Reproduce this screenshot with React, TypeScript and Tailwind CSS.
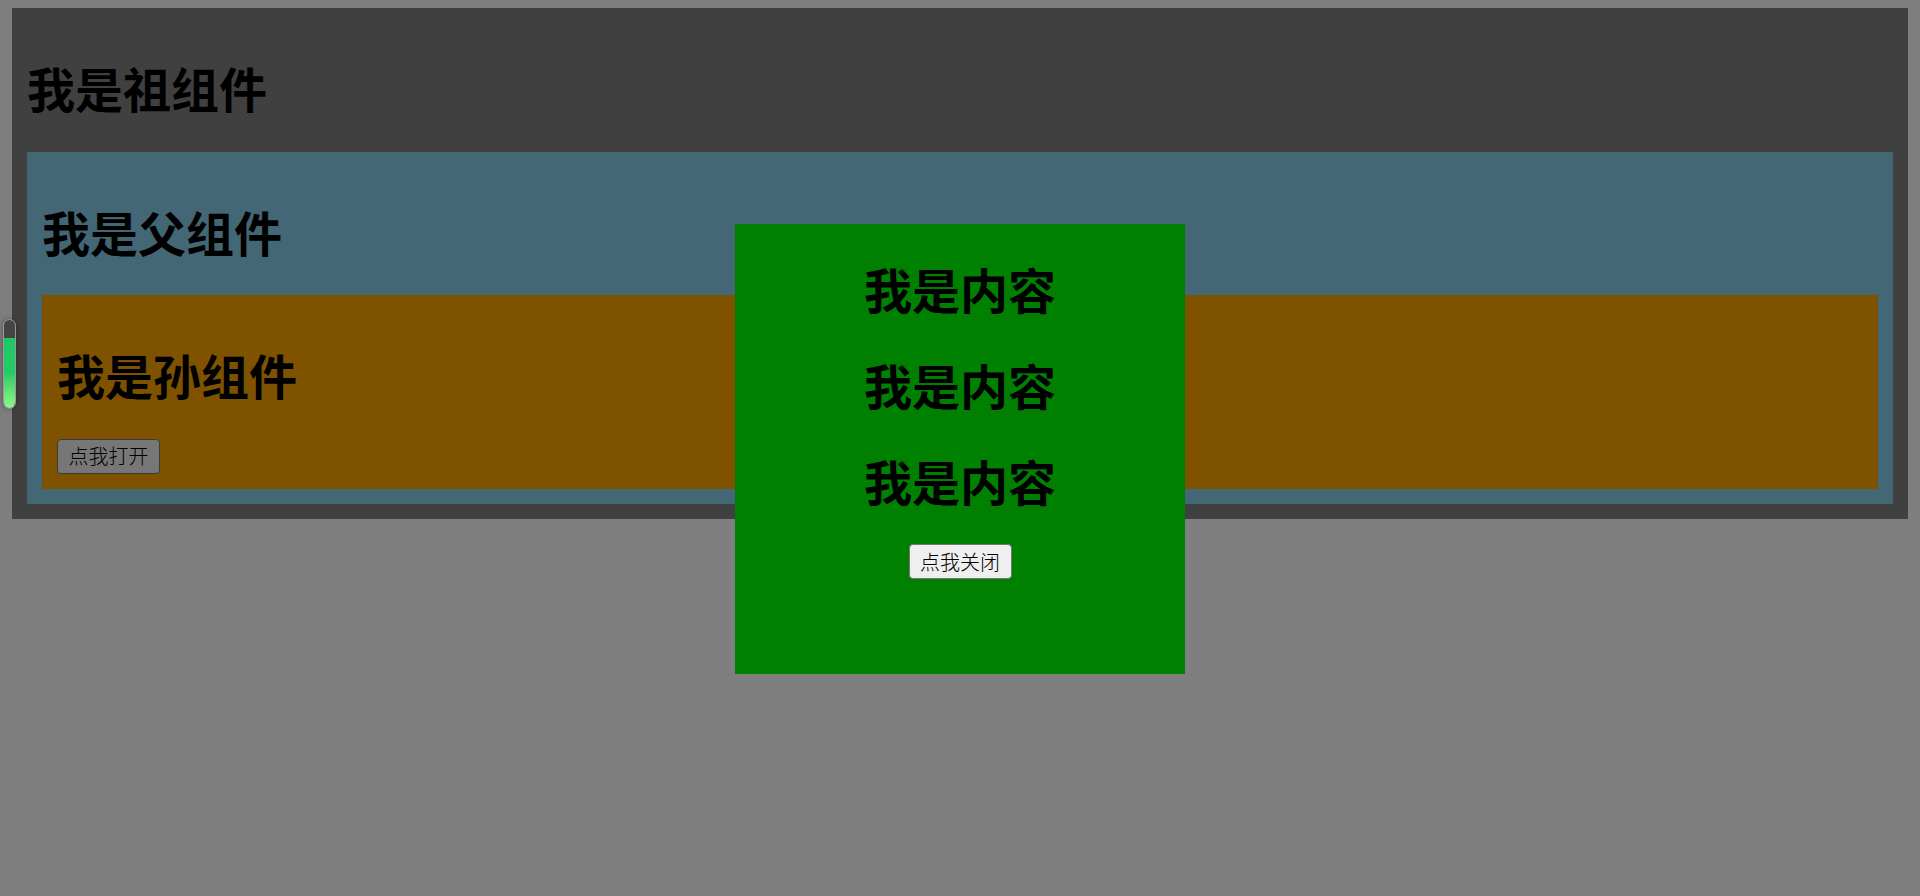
import { useState } from 'react'

const font = "font-['Noto_Sans_CJK_SC','Microsoft_YaHei',sans-serif]"

function Title({ children, first = true }: { children: React.ReactNode; first?: boolean }) {
  return (
    <h1
      className={`${first ? 'my-[32px]' : 'mb-[32px]'} text-[48px] font-bold leading-[64.5px] text-black`}
    >
      {children}
    </h1>
  )
}

function ModalTitle({ children, first = false }: { children: React.ReactNode; first?: boolean }) {
  return (
    <h1 className={`${first ? 'my-[32px]' : 'mb-[32px]'} text-[48px] font-bold leading-[64px] text-black`}>
      {children}
    </h1>
  )
}

function Btn({ children, onClick }: { children: React.ReactNode; onClick?: () => void }) {
  return (
    <button
      onClick={onClick}
      className="flex h-[35px] w-[103px] items-center justify-center rounded-[4px] border border-[#767676] bg-[#efefef] text-[20px] font-light leading-none text-black"
    >
      {children}
    </button>
  )
}

export default function App() {
  const [open, setOpen] = useState(true)

  return (
    <div className={`min-h-[896px] bg-white px-[12px] pt-[8px] ${font}`}>
      <div className="bg-[#808080] p-[15px]">
        <Title>我是祖组件</Title>
        <div className="bg-[#87ceeb] p-[15px]">
          <Title>我是父组件</Title>
          <div className="bg-[#ffa500] p-[15px]">
            <Title>我是孙组件</Title>
            <Btn onClick={() => setOpen(true)}>点我打开</Btn>
          </div>
        </div>
      </div>

      {open && (
        <>
          <div className="fixed inset-0 bg-black/50" />
          <div className="fixed left-[735px] top-[224px] flex h-[450px] w-[450px] flex-col items-center bg-[#008000] text-center">
            <ModalTitle first>我是内容</ModalTitle>
            <ModalTitle>我是内容</ModalTitle>
            <ModalTitle>我是内容</ModalTitle>
            <Btn onClick={() => setOpen(false)}>点我关闭</Btn>
          </div>
        </>
      )}

      {/* extension widget on the left edge */}
      <div className="fixed left-[3px] top-[319px] flex h-[90px] w-[13px] flex-col overflow-hidden rounded-full border border-[#9a9a9a] bg-[#444] shadow-[0_0_6px_rgba(0,0,0,0.4)]">
        <div className="h-[18px]" />
        <div className="flex-1 rounded-b-full bg-gradient-to-b from-[#1fc866] via-[#22cc66] to-[#8cf78a]" />
      </div>
    </div>
  )
}
